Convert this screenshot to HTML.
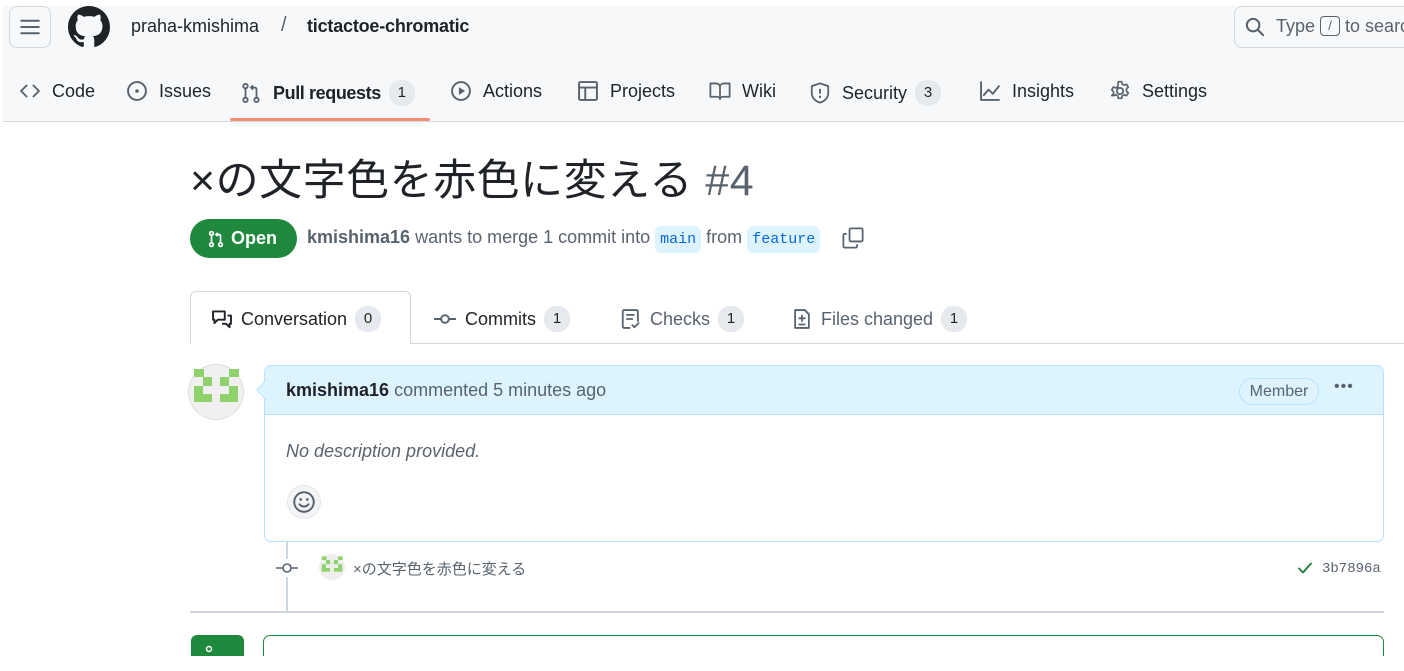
<!DOCTYPE html>
<html><head><meta charset="utf-8">
<style>
*{box-sizing:border-box;margin:0;padding:0}
body{width:1404px;height:671px;background:#fff;font-family:"Liberation Sans","Noto Sans CJK JP",sans-serif;color:#1f2328;position:relative;overflow:hidden}
.a{position:absolute;white-space:nowrap}
.hdr{position:absolute;left:3px;top:6px;width:1401px;height:116px;background:#f6f8fa;border-bottom:1px solid #d0d7de}
.nav{font-size:18px;color:#1f2328;top:80px;display:flex;align-items:center;gap:8px}
.cnt{display:inline-block;background:#e6e9ed;border-radius:12px;font-size:15px;min-width:26px;height:26px;line-height:26px;text-align:center;color:#1f2328}
svg{display:block}
.mono{font-family:"Liberation Mono",monospace}
</style></head><body>
<div class="hdr"></div>
<div class="a" style="left:9px;top:6px;width:42px;height:42px;border:1px solid #d0d7de;border-radius:8px;background:#f6f8fa"></div>
<svg class="a" style="left:20px;top:17px" width="20" height="20" viewBox="0 0 16 16"><path d="M1 3h14M1 8h14M1 13h14" stroke="#59636e" stroke-width="1.6" stroke-linecap="round"/></svg>
<svg class="a" style="left:68px;top:6px" width="42" height="42" viewBox="0 0 16 16"><path fill="#1f2328" d="M8 0C3.58 0 0 3.58 0 8c0 3.54 2.29 6.530 5.47 7.590.4.07.55-.17.55-.38 0-.19-.01-.82-.01-1.49-2.01.37-2.53-.49-2.69-.94-.09-.23-.48-.94-.82-1.13-.28-.15-.68-.52-.01-.53.63-.01 1.08.58 1.23.82.72 1.21 1.87.87 2.33.66.07-.52.28-.87.51-1.07-1.78-.2-3.64-.89-3.64-3.95 0-.87.31-1.59.82-2.15-.08-.2-.36-1.02.08-2.12 0 0 .67-.21 2.2.82.64-.18 1.32-.27 2-.27.68 0 1.36.09 2 .27 1.53-1.04 2.2-.82 2.2-.82.44 1.1.16 1.92.08 2.12.51.56.82 1.27.82 2.15 0 3.070-1.87 3.750-3.65 3.950.29.25.54.73.54 1.48 0 1.07-.01 1.93-.01 2.2 0 .21.15.46.55.38A8.013 8.013 0 0016 8c0-4.42-3.58-8-8-8z"/></svg>
<div class="a" style="left:131px;top:16px;font-size:18px;color:#1f2328">praha-kmishima</div>
<div class="a" style="left:281px;top:14px;font-size:20px;color:#59636e">/</div>
<div class="a" style="left:307px;top:16px;font-size:18px;font-weight:bold;letter-spacing:-0.2px">tictactoe-chromatic</div>
<div class="a" style="left:1234px;top:6px;width:200px;height:42px;border:1px solid #d0d7de;border-radius:8px;background:#f6f8fa"></div>
<svg class="a" style="left:1245px;top:17px" width="20" height="20" viewBox="0 0 16 16"><circle cx="6.5" cy="6.5" r="5" fill="none" stroke="#59636e" stroke-width="1.6"/><path d="M10.3 10.3L14.5 14.5" stroke="#59636e" stroke-width="1.6" stroke-linecap="round"/></svg>
<div class="a" style="left:1276px;top:16px;font-size:18px;color:#59636e">Type <span style="display:inline-block;border:1px solid #59636e;border-radius:4px;width:20px;height:20px;font-size:13px;line-height:18px;text-align:center;vertical-align:2px">/</span> to search</div>
<div class="a nav" style="left:19px"><svg width="22" height="22" viewBox="0 0 16 16"><path d="M5.5 4L1.5 8l4 4M10.5 4l4 4-4 4" fill="none" stroke="#59636e" stroke-width="1.4" stroke-linecap="round" stroke-linejoin="round"/></svg><span style="margin-left:3px">Code</span></div>
<div class="a nav" style="left:126px"><svg width="22" height="22" viewBox="0 0 16 16"><circle cx="8" cy="8" r="6.5" fill="none" stroke="#59636e" stroke-width="1.4"/><circle cx="8" cy="8" r="1.3" fill="#59636e"/></svg><span style="margin-left:3px">Issues</span></div>
<div class="a nav" style="left:240px"><svg width="22" height="22" viewBox="0 0 16 16"><g fill="none" stroke="#59636e" stroke-width="1.3"><circle cx="4" cy="3" r="1.6"/><circle cx="4" cy="13" r="1.6"/><circle cx="12" cy="13" r="1.6"/><path d="M4 4.6v6.8M12 11.4V5.5c0-1-.5-1.5-1.5-1.5H8M9.5 2.5L8 4l1.5 1.5"/></g></svg><b style="margin-left:3px;letter-spacing:-0.4px">Pull requests</b><span class="cnt">1</span></div>
<div class="a" style="left:230px;top:118px;width:200px;height:3px;background:#fd8c73;border-radius:2px"></div>
<div class="a nav" style="left:450px"><svg width="22" height="22" viewBox="0 0 16 16"><circle cx="8" cy="8" r="6.5" fill="none" stroke="#59636e" stroke-width="1.4"/><path d="M6.5 5.2v5.6L11 8z" fill="#59636e"/></svg><span style="margin-left:3px">Actions</span></div>
<div class="a nav" style="left:577px"><svg width="22" height="22" viewBox="0 0 16 16"><rect x="1.5" y="1.5" width="13" height="13" rx="1" fill="none" stroke="#59636e" stroke-width="1.4"/><path d="M1.5 5.5h13M6 5.5v9" stroke="#59636e" stroke-width="1.4"/></svg><span style="margin-left:3px">Projects</span></div>
<div class="a nav" style="left:708px"><svg width="24" height="22" viewBox="0 0 16 16"><path d="M1 2.5h4c1.7 0 3 1 3 2.5v9c0-1-1-1.8-2.5-1.8H1zM15 2.5h-4C9.3 2.5 8 3.5 8 5v9c0-1 1-1.8 2.5-1.8H15z" fill="none" stroke="#59636e" stroke-width="1.3" stroke-linejoin="round"/></svg><span style="margin-left:2px">Wiki</span></div>
<div class="a nav" style="left:809px"><svg width="22" height="22" viewBox="0 0 16 16"><path d="M8 1L2 3v5c0 3.5 2.7 6 6 7 3.3-1 6-3.5 6-7V3z" fill="none" stroke="#59636e" stroke-width="1.3" stroke-linejoin="round"/><path d="M8 5v3.5" stroke="#59636e" stroke-width="1.4"/><circle cx="8" cy="10.8" r=".9" fill="#59636e"/></svg><span style="margin-left:3px">Security</span><span class="cnt">3</span></div>
<div class="a nav" style="left:979px"><svg width="22" height="22" viewBox="0 0 16 16"><path d="M1.5 1.5v13h13M3.5 11l3.5-4 3 3 4.5-5.5" fill="none" stroke="#59636e" stroke-width="1.4" stroke-linejoin="round" stroke-linecap="round"/></svg><span style="margin-left:3px">Insights</span></div>
<div class="a nav" style="left:1109px"><svg width="22" height="22" viewBox="0 0 16 16"><circle cx="8" cy="8" r="2.3" fill="none" stroke="#59636e" stroke-width="1.3"/><path d="M6.8 1.2h2.4l.4 1.8 1.5.8 1.7-.7 1.2 2.1-1.3 1.2v1.7l1.3 1.2-1.2 2.1-1.7-.7-1.5.8-.4 1.8H6.8l-.4-1.8-1.5-.8-1.7.7L2 11.3l1.3-1.2V8.4L2 7.2l1.2-2.1 1.7.7 1.5-.8z" fill="none" stroke="#59636e" stroke-width="1.2" stroke-linejoin="round"/></svg><span style="margin-left:3px">Settings</span></div>
<div class="a" style="left:190px;top:153px;font-size:43px;line-height:56px;color:#1f2328;letter-spacing:0.5px">×の文字色を赤色に変える <span style="color:#59636e;font-weight:300">#4</span></div>
<div class="a" style="left:190px;top:219px;width:107px;height:39px;border-radius:20px;background:#1f883d;color:#fff;font-size:18px;font-weight:bold;display:flex;align-items:center;padding-left:17px;gap:6px"><svg width="18" height="18" viewBox="0 0 16 16"><g fill="none" stroke="#fff" stroke-width="1.5"><circle cx="4" cy="3" r="1.6"/><circle cx="4" cy="13" r="1.6"/><circle cx="12" cy="13" r="1.6"/><path d="M4 4.6v6.8M12 11.4V5.5c0-1-.5-1.5-1.5-1.5H8M9.5 2.5L8 4l1.5 1.5"/></g></svg>Open</div>
<div class="a" style="left:307px;top:227px;font-size:18px;color:#59636e"><b style="color:#59636e">kmishima16</b> wants to merge 1 commit into <span class="mono" style="background:#ddf4ff;color:#0969da;font-size:15px;padding:5px 5px;border-radius:6px">main</span> from <span class="mono" style="background:#ddf4ff;color:#0969da;font-size:15px;padding:5px 5px;border-radius:6px">feature</span></div>
<svg class="a" style="left:842px;top:227px" width="22" height="22" viewBox="0 0 16 16"><g fill="none" stroke="#59636e" stroke-width="1.3" stroke-linejoin="round"><rect x="5.5" y="1" width="9.5" height="9.5" rx="1"/><path d="M3.5 5H2a1 1 0 00-1 1v8a1 1 0 001 1h8a1 1 0 001-1v-1.5"/></g></svg>
<div class="a" style="left:190px;top:343px;width:1214px;height:1px;background:#d0d7de"></div>
<div class="a" style="left:190px;top:291px;width:221px;height:53px;border:1px solid #d0d7de;border-bottom:none;border-radius:6px 6px 0 0;background:#fff"></div>
<div class="a nav" style="left:211px;top:306px;font-size:18px"><svg width="22" height="22" viewBox="0 0 16 16"><g fill="none" stroke="#1f2328" stroke-width="1.4" stroke-linejoin="round"><path d="M1.5 2.5h8.5v6H5L2.5 11V8.5h-1z"/><path d="M12 5.5h2.5v6h-1V14L11 11.5H8"/></g></svg><span>Conversation</span><span class="cnt">0</span></div>
<div class="a nav" style="left:433px;top:306px;font-size:18px"><svg width="24" height="22" viewBox="0 0 16 16"><circle cx="8" cy="8" r="2.8" fill="none" stroke="#59636e" stroke-width="1.4"/><path d="M0 8h5.2M10.8 8H16" stroke="#59636e" stroke-width="1.4"/></svg><span>Commits</span><span class="cnt">1</span></div>
<div class="a nav" style="left:620px;top:306px;font-size:18px;color:#59636e"><svg width="22" height="22" viewBox="0 0 16 16"><path d="M7 14.5H3a1 1 0 01-1-1v-11a1 1 0 011-1h9a1 1 0 011 1v7M5 5h5M5 8h4M9 12.5l1.5 1.5 3-3" fill="none" stroke="#59636e" stroke-width="1.3" stroke-linejoin="round" stroke-linecap="round"/></svg><span>Checks</span><span class="cnt">1</span></div>
<div class="a nav" style="left:791px;top:306px;font-size:18px;color:#59636e"><svg width="22" height="22" viewBox="0 0 16 16"><path d="M3 1.5h7l3 3v10H3z" fill="none" stroke="#59636e" stroke-width="1.3" stroke-linejoin="round"/><path d="M8 5v5M5.5 7.5h5M5.5 12h5" stroke="#59636e" stroke-width="1.3"/></svg><span>Files changed</span><span class="cnt">1</span></div>
<svg class="a" style="left:188px;top:364px" width="56" height="56" viewBox="0 0 56 56"><circle cx="28" cy="28" r="27.5" fill="#f0f0f0" stroke="#e0e0e0"/><g fill="#8fd16a"><rect x="6" y="5" width="10" height="8"/><rect x="41" y="5" width="10" height="8"/><rect x="15" y="13" width="9" height="9"/><rect x="32" y="13" width="9" height="9"/><rect x="6" y="22" width="9" height="16"/><rect x="6" y="30" width="18" height="8"/><rect x="41" y="22" width="9" height="16"/><rect x="32" y="30" width="18" height="8"/></g></svg>
<div class="a" style="left:264px;top:365px;width:1120px;height:177px;border:1px solid #b6e3ff;border-radius:7px;background:#fff;overflow:hidden">
 <div style="height:49px;background:#ddf4ff;border-bottom:1px solid #b6e3ff"></div>
</div>
<svg class="a" style="left:256px;top:380px" width="10" height="20" viewBox="0 0 10 20"><path d="M10 0L1 10l9 10" fill="#ddf4ff" stroke="#b6e3ff"/></svg>
<div class="a" style="left:286px;top:380px;font-size:18px;color:#59636e"><b style="color:#1f2328">kmishima16</b> commented 5 minutes ago</div>
<div class="a" style="left:1239px;top:378px;width:80px;height:27px;border:1px solid #b6e3ff;border-radius:14px;font-size:16px;color:#59636e;text-align:center;line-height:25px">Member</div>
<div class="a" style="left:1334px;top:378px;font-size:16px;color:#59636e;letter-spacing:1px">•••</div>
<div class="a" style="left:286px;top:441px;font-size:18px;font-style:italic;color:#59636e">No description provided.</div>
<div class="a" style="left:287px;top:485px;width:34px;height:34px;border-radius:17px;background:#f3f4f6;border:1px solid #e5e7eb"></div>
<svg class="a" style="left:292px;top:490px" width="24" height="24" viewBox="0 0 16 16"><circle cx="8" cy="8" r="6.5" fill="none" stroke="#59636e" stroke-width="1.3"/><circle cx="5.8" cy="6.3" r=".9" fill="#59636e"/><circle cx="10.2" cy="6.3" r=".9" fill="#59636e"/><path d="M5 9.5c1.5 2 4.5 2 6 0" fill="none" stroke="#59636e" stroke-width="1.3" stroke-linecap="round"/></svg>
<div class="a" style="left:286px;top:542px;width:2px;height:70px;background:#d0d7de"></div>
<svg class="a" style="left:275px;top:559px" width="24" height="18" viewBox="0 0 24 18"><rect x="0" y="0" width="24" height="18" fill="#fff"/><circle cx="12" cy="9" r="4" fill="#fff" stroke="#59636e" stroke-width="1.6"/><path d="M1 9h7M16 9h7" stroke="#59636e" stroke-width="1.6"/></svg>
<svg class="a" style="left:319px;top:554px" width="26" height="26" viewBox="0 0 56 56"><circle cx="28" cy="28" r="28" fill="#eee"/><g fill="#8fd16a"><rect x="6" y="5" width="10" height="8"/><rect x="41" y="5" width="10" height="8"/><rect x="15" y="13" width="9" height="9"/><rect x="32" y="13" width="9" height="9"/><rect x="6" y="22" width="9" height="16"/><rect x="6" y="30" width="18" height="8"/><rect x="41" y="22" width="9" height="16"/><rect x="32" y="30" width="18" height="8"/></g></svg>
<div class="a" style="left:353px;top:558px;font-size:15px;color:#59636e">×の文字色を赤色に変える</div>
<svg class="a" style="left:1296px;top:560px" width="18" height="16" viewBox="0 0 16 16"><path d="M2 8.5l4 4 8-9" fill="none" stroke="#1a7f37" stroke-width="1.8" stroke-linecap="round" stroke-linejoin="round"/></svg>
<div class="a mono" style="left:1322px;top:561px;font-size:14px;color:#59636e">3b7896a</div>
<div class="a" style="left:190px;top:611px;width:1194px;height:2px;background:#d0d7de"></div>
<div class="a" style="left:191px;top:635px;width:53px;height:21px;background:#1f883d;border-radius:6px 6px 0 0"></div>
<svg class="a" style="left:203px;top:645px" width="12" height="11" viewBox="0 0 12 11"><circle cx="6" cy="4" r="2.5" fill="none" stroke="#fff" stroke-width="1.5"/></svg>
<div class="a" style="left:263px;top:635px;width:1121px;height:30px;border:1px solid #1f883d;border-bottom:none;border-radius:7px 7px 0 0"></div>
<div class="a" style="left:0;top:656px;width:1404px;height:15px;background:#fff"></div>
</body></html>
